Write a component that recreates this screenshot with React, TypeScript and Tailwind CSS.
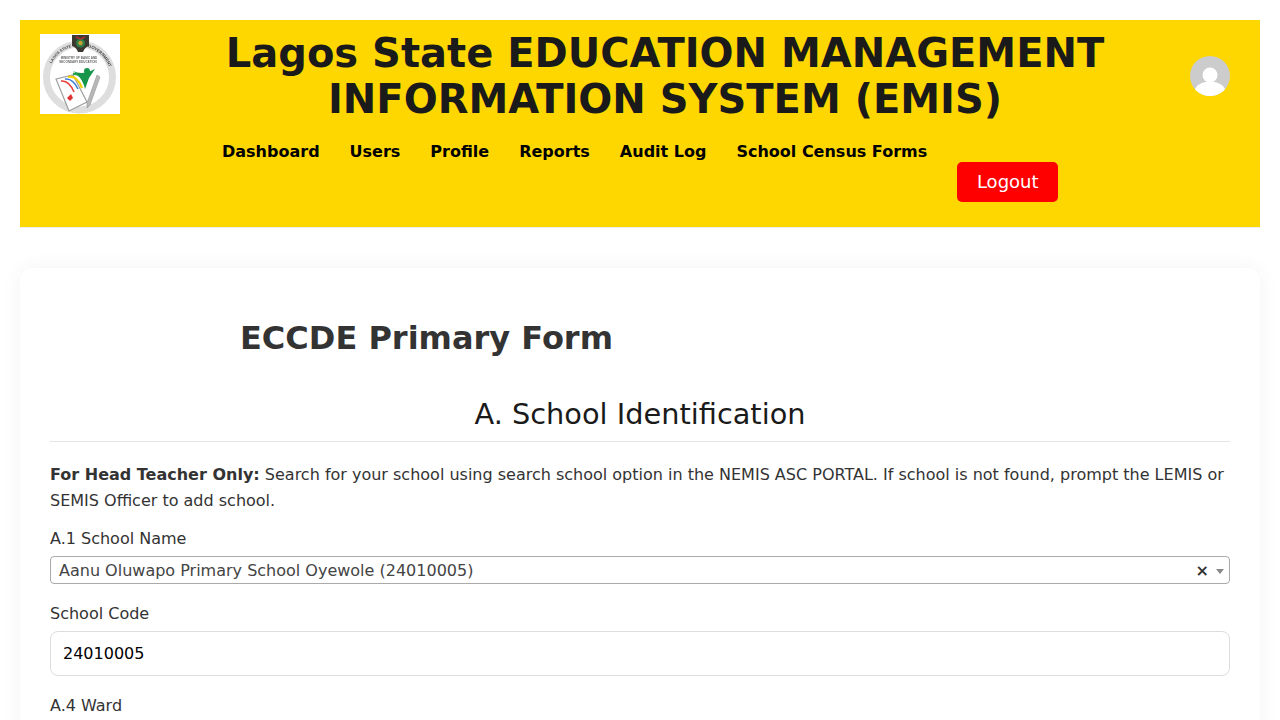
const F = "font-['DejaVu_Sans',sans-serif]";

function Logo() {
  return (
    <div className="w-20 h-20 bg-white shrink-0 mt-[14px] overflow-hidden">
      <svg width="80" height="80" viewBox="0 0 80 80" className="blur-[0.4px]">
        <defs>
          <path id="ringTop" d="M8.5 43 A31 31 0 0 1 70.5 43" fill="none" />
        </defs>
        <circle cx="39.5" cy="43" r="33" fill="none" stroke="#dedede" strokeWidth="7" />
        <text fontSize="3.8" fontWeight="700" fill="#4a4a4a" fontFamily="'Liberation Sans', sans-serif">
          <textPath href="#ringTop" startOffset="14">LAGOS STATE</textPath>
        </text>
        <text fontSize="4.2" fontWeight="700" fill="#3a3a3a" fontFamily="'Liberation Sans', sans-serif">
          <textPath href="#ringTop" startOffset="57">GOVERNMENT</textPath>
        </text>
        <path d="M32 1 H49 L49 12 Q45 13 43 18 H38 Q36 13 32 12 Z" fill="#3c3a30" />
        <circle cx="40.5" cy="9" r="4.5" fill="#2f7d4a" />
        <circle cx="40.5" cy="9" r="2.2" fill="#c8a030" />
        <path d="M36 3 L40.5 5 L45 3" stroke="#b03030" strokeWidth="1.4" fill="none" />
        <text x="39" y="25" textAnchor="middle" fontSize="3" fontWeight="700" fill="#666" fontFamily="'Liberation Sans', sans-serif">MINISTRY OF BASIC AND</text>
        <text x="38" y="29" textAnchor="middle" fontSize="3" fontWeight="700" fill="#666" fontFamily="'Liberation Sans', sans-serif">SECONDARY EDUCATION</text>
        <path d="M16 45 L33 41 L47 68 L29 77 Z" fill="#fff" stroke="#9c9c9c" strokeWidth="1.2" />
        <path d="M21 47 Q29 46 34 58" fill="none" stroke="#e23b3b" strokeWidth="1.5" />
        <path d="M25 45 Q33 44 38 55" fill="none" stroke="#3a7bd5" strokeWidth="1.5" />
        <path d="M28 43 Q37 41 42 54" fill="none" stroke="#f0d000" strokeWidth="2.2" />
        <path d="M33 40 Q41 39 45 50" fill="none" stroke="#29a34a" strokeWidth="2.4" />
        <path d="M33 37 Q42 42 55 35 L49 44 L45 55 Q43 44 33 37 Z" fill="#15964a" />
        <circle cx="47" cy="37" r="3" fill="#15964a" />
        <path d="M57 41 L60 43 L50 71 L47 74 L47 69 Z" fill="#b8b8b8" stroke="#8a8a8a" strokeWidth="0.5" />
        <path d="M27 64 L31 60 L33 64 L30 67 Z" fill="#d33" />
      </svg>
    </div>
  );
}

function Avatar() {
  return (
    <div className="w-10 h-10 rounded-full overflow-hidden bg-[#cccccc] shrink-0">
      <svg width="40" height="40" viewBox="0 0 40 40">
        <circle cx="20" cy="19" r="7.5" fill="#fff" />
        <ellipse cx="20" cy="36" rx="15.5" ry="10.5" fill="#fff" />
      </svg>
    </div>
  );
}

const links = ["Dashboard", "Users", "Profile", "Reports", "Audit Log", "School Census Forms"];

export default function App() {
  return (
    <div className={`${F} bg-white h-[720px] overflow-hidden p-5 text-[#212529]`}>
      <header className="bg-[#ffd700] h-[208px] border-b border-[#eeeeee] flex pl-5 pr-[30px]">
        <Logo />
        <div className="flex-1 flex flex-col items-center min-w-0 pt-[10px] pl-5">
          <h1 className="text-[40px] leading-[46px] font-bold text-[#1a1a1a] text-center w-[900px]">
            Lagos State EDUCATION MANAGEMENT INFORMATION SYSTEM (EMIS)
          </h1>
          <nav className="flex gap-[30px] items-start mt-[18px] self-start ml-[82px]">
            {links.map((l) => (
              <a key={l} className="text-[16px] leading-[24px] font-bold text-black whitespace-nowrap">
                {l}
              </a>
            ))}
            <button className="bg-[#ff0000] text-white text-[18px] leading-[24px] rounded-[5px] w-[101px] h-10 mt-[22px]">
              Logout
            </button>
          </nav>
        </div>
        <div className="mt-9">
          <Avatar />
        </div>
      </header>

      <main className="mt-10 bg-white rounded-xl shadow-[0_0_20px_rgba(0,0,0,0.05)] px-[30px] pt-[48px] pb-10">
        <h2 className="text-[32px] leading-[44px] font-bold text-[#333333] pl-[190px]">ECCDE Primary Form</h2>
        <h3 className="text-[28.8px] leading-[34px] text-[#1a1a1a] text-center mt-[37px] pb-[10px] border-b border-[#e5e5e5]">
          A. School Identification
        </h3>
        <p className="text-[16px] leading-[26px] text-[#333333] mt-5">
          <strong>For Head Teacher Only:</strong> Search for your school using search school option in the NEMIS ASC PORTAL. If school is not found, prompt the LEMIS or SEMIS Officer to add school.
        </p>
        <label className="block text-[16px] leading-[24px] text-[#333333] mt-[13px]">A.1 School Name</label>
        <div className="mt-[5px] h-7 border border-[#aaaaaa] rounded flex items-center pl-2 pr-[5px] pt-[2px]">
          <span className="flex-1 text-[16px] text-[#444444]">Aanu Oluwapo Primary School Oyewole (24010005)</span>
          <span className="text-[16px] font-bold text-[#333333] leading-none -translate-x-px">×</span>
          <span className="ml-[6px] w-0 h-0 border-x-[4px] border-x-transparent border-t-[5px] border-t-[#888888]" />
        </div>
        <label className="block text-[16px] leading-[24px] text-[#333333] mt-[18px]">School Code</label>
        <div className="mt-[5px] h-[45px] border border-[#dddddd] rounded-lg flex items-center px-3 text-[16px] text-black">
          24010005
        </div>
        <label className="block text-[16px] leading-[24px] text-[#333333] mt-[18px]">A.4 Ward</label>
      </main>
    </div>
  );
}
